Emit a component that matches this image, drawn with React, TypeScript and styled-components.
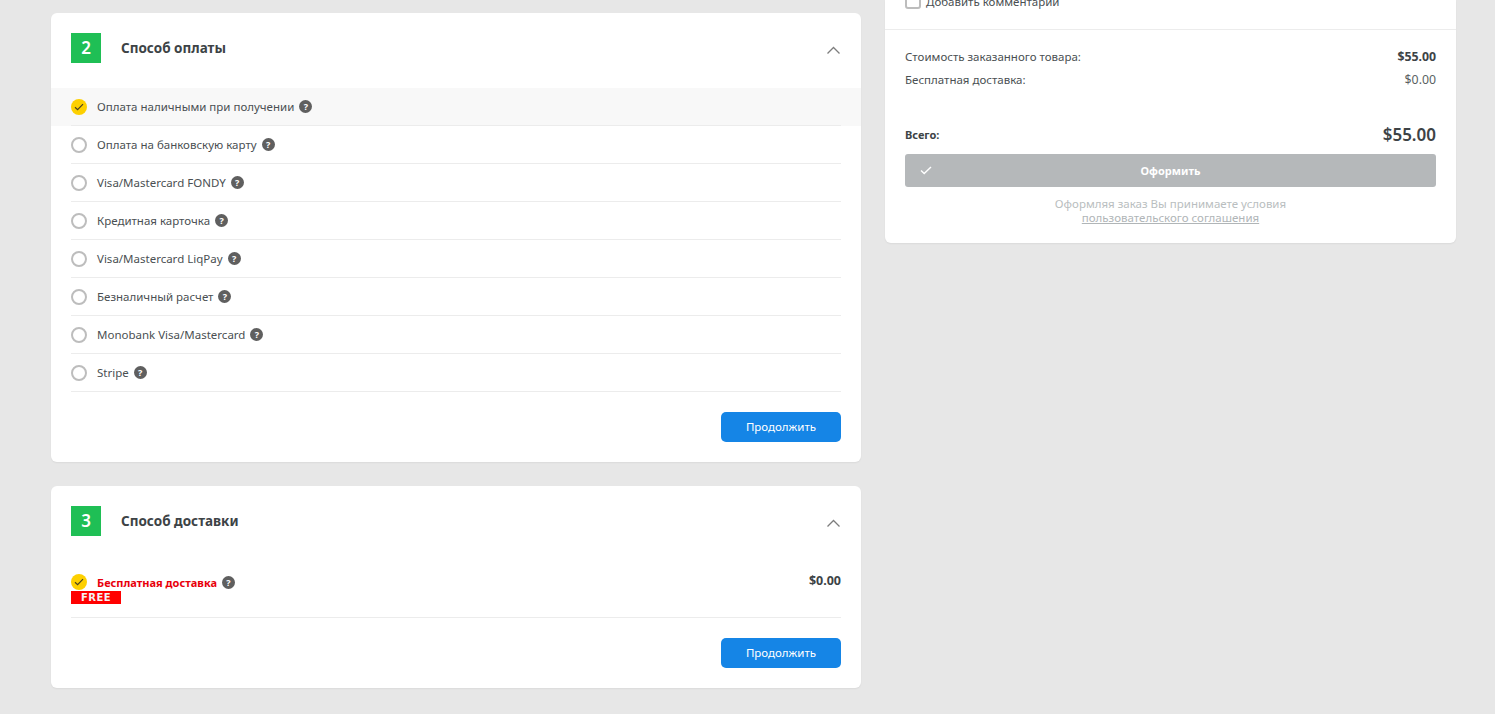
import styled, { createGlobalStyle } from "styled-components";

const GlobalStyle = createGlobalStyle`
  html, body {
    margin: 0;
    padding: 0;
    height: 714px;
    overflow: hidden;
    background: #e7e7e7;
    font-family: "Noto Sans", "Open Sans", sans-serif;
    color: #3d4346;
  }
`;

const Page = styled.div`
  display: flex;
  align-items: flex-start;
  gap: 24px;
  padding-left: 51px;
`;

const LeftColumn = styled.div`
  width: 810px;
  padding-top: 13px;
  display: flex;
  flex-direction: column;
  gap: 24px;
`;

const Card = styled.section`
  background: #fff;
  border-radius: 6px;
  box-shadow: 0 1px 2px rgba(0, 0, 0, 0.06);
`;

const CardHeader = styled.header`
  height: 75px;
  padding: 20px 20px 0;
  box-sizing: border-box;
  display: flex;
  align-items: flex-start;
`;

const StepBadge = styled.div`
  width: 30px;
  height: 30px;
  background: #1fbf55;
  color: #fff;
  font-size: 17px;
  font-weight: 600;
  line-height: 30px;
  text-align: center;
`;

const CardTitle = styled.h2`
  margin: 0 0 0 20px;
  font-size: 13.5px;
  font-weight: 700;
  line-height: 30px;
  color: #3d4346;
`;

const Chevron = styled.svg`
  margin: 13px 1px 0 auto;
  width: 13px;
  height: 8px;
`;

const Row = styled.div<{ $active?: boolean }>`
  padding: 0 20px;
  background: ${(p) => (p.$active ? "#f8f8f8" : "transparent")};
`;

const RowInner = styled.div`
  height: 38px;
  box-sizing: border-box;
  border-bottom: 1px solid #ececec;
  display: flex;
  align-items: center;
`;

const RadioOff = styled.span`
  width: 16px;
  height: 16px;
  box-sizing: border-box;
  border: 2px solid #bdbdbd;
  border-radius: 50%;
  background: #fff;
`;

const RadioOn = styled.span`
  width: 16px;
  height: 16px;
  border-radius: 50%;
  background: #fdd000;
  display: flex;
  align-items: center;
  justify-content: center;
`;

const RowLabel = styled.span`
  margin-left: 10px;
  font-size: 11.5px;
  color: #4a4f52;
`;

const Help = styled.span`
  margin-left: 5px;
  width: 13px;
  height: 13px;
  border-radius: 50%;
  background: #5f5f5f;
  color: #fff;
  font-size: 9px;
  font-weight: 700;
  line-height: 13px;
  text-align: center;
`;

const CardFooter = styled.div`
  padding: 20px;
  display: flex;
  justify-content: flex-end;
`;

const ContinueButton = styled.button`
  width: 120px;
  height: 30px;
  padding: 0 0 2px;
  border: 0;
  border-radius: 5px;
  background: #1585e6;
  color: #fff;
  font-family: inherit;
  font-size: 11.5px;
`;

const DeliveryBlock = styled.div`
  margin: 0 20px;
  padding-top: 13px;
  height: 57px;
  box-sizing: border-box;
  border-bottom: 1px solid #ececec;
  display: flex;
  justify-content: space-between;
  align-items: flex-start;
`;

const DeliveryRow = styled.div`
  display: flex;
  align-items: center;
  height: 16px;
`;

const DeliveryLabel = styled.span`
  margin-left: 10px;
  font-size: 11px;
  font-weight: 700;
  color: #e8000b;
`;

const FreeTag = styled.div`
  width: 50px;
  height: 13px;
  margin-top: 1px;
  background: #ff0000;
  color: #f4f4f4;
  font-family: "DejaVu Sans", sans-serif;
  font-size: 10px;
  font-weight: 700;
  line-height: 13px;
  text-align: center;
  letter-spacing: 0.4px;
`;

const DeliveryPrice = styled.span`
  font-size: 12.5px;
  font-weight: 700;
  line-height: 13px;
  color: #3d4346;
`;

const SummaryCard = styled(Card)`
  width: 571px;
  height: 243px;
  border-radius: 0 0 6px 6px;
`;

const CommentArea = styled.div`
  height: 30px;
  box-sizing: border-box;
  padding: 0 20px 27px;
  border-bottom: 1px solid #ececec;
  display: flex;
  align-items: center;
  overflow: hidden;
`;

const CheckBox = styled.span`
  width: 16px;
  height: 15px;
  flex: none;
  box-sizing: border-box;
  border: 2px solid #bdbdbd;
  border-radius: 3px;
`;

const CommentLabel = styled.span`
  margin-left: 5px;
  font-size: 11.5px;
  white-space: nowrap;
  color: #4a4f52;
`;

const Summary = styled.div`
  padding: 15px 20px 0;
`;

const SummaryLine = styled.div`
  display: flex;
  justify-content: space-between;
  height: 23px;
  align-items: center;
  font-size: 11.5px;
  color: #4a4f52;
`;

const SummaryValue = styled.span<{ $bold?: boolean }>`
  font-size: 12.3px;
  font-weight: ${(p) => (p.$bold ? 700 : 400)};
  color: ${(p) => (p.$bold ? "#3d4346" : "#5a5f62")};
`;

const TotalLine = styled.div`
  margin: 32px 0 9px;
  height: 22px;
  display: flex;
  justify-content: space-between;
  align-items: center;
`;

const TotalLabel = styled.span`
  font-size: 11px;
  font-weight: 700;
`;

const TotalValue = styled.span`
  font-size: 17px;
  font-weight: 600;
  color: #3d4346;
`;

const SubmitButton = styled.button`
  position: relative;
  width: 100%;
  height: 33px;
  border: 0;
  border-radius: 3px;
  background: #b5b8ba;
  color: #fff;
  font-family: inherit;
  font-size: 11px;
  font-weight: 700;
`;

const SubmitCheck = styled.svg`
  position: absolute;
  left: 15px;
  top: 12px;
  width: 12px;
  height: 9px;
`;

const Note = styled.p`
  margin: 10px 0 0;
  font-size: 11.5px;
  line-height: 14px;
  text-align: center;
  color: #b9bec0;
`;

const NoteLink = styled.a`
  display: block;
  color: #b0b5b7;
  text-decoration: underline;
`;

const methods = [
  "Оплата наличными при получении",
  "Оплата на банковскую карту",
  "Visa/Mastercard FONDY",
  "Кредитная карточка",
  "Visa/Mastercard LiqPay",
  "Безналичный расчет",
  "Monobank Visa/Mastercard",
  "Stripe",
];

function Tick() {
  return (
    <svg width="10" height="8" viewBox="0 0 10 8" fill="none">
      <path d="M1 4.2 3.6 6.6 9 1.2" stroke="#4a4220" strokeWidth="1.2" />
    </svg>
  );
}

function Header({ step, title }: { step: number; title: string }) {
  return (
    <CardHeader>
      <StepBadge>{step}</StepBadge>
      <CardTitle>{title}</CardTitle>
      <Chevron viewBox="0 0 13 8" fill="none">
        <path d="M.5 7.5 6.5 1.5 12.5 7.5" stroke="#7d7d7d" strokeWidth="1.3" />
      </Chevron>
    </CardHeader>
  );
}

export default function App() {
  return (
    <Page>
      <GlobalStyle />
      <LeftColumn>
        <Card>
          <Header step={2} title="Способ оплаты" />
          {methods.map((m, i) => (
            <Row key={m} $active={i === 0}>
              <RowInner>
                {i === 0 ? (
                  <RadioOn>
                    <Tick />
                  </RadioOn>
                ) : (
                  <RadioOff />
                )}
                <RowLabel>{m}</RowLabel>
                <Help>?</Help>
              </RowInner>
            </Row>
          ))}
          <CardFooter>
            <ContinueButton>Продолжить</ContinueButton>
          </CardFooter>
        </Card>
        <Card>
          <Header step={3} title="Способ доставки" />
          <DeliveryBlock>
            <div>
              <DeliveryRow>
                <RadioOn>
                  <Tick />
                </RadioOn>
                <DeliveryLabel>Бесплатная доставка</DeliveryLabel>
                <Help>?</Help>
              </DeliveryRow>
              <FreeTag>FREE</FreeTag>
            </div>
            <DeliveryPrice>$0.00</DeliveryPrice>
          </DeliveryBlock>
          <CardFooter>
            <ContinueButton>Продолжить</ContinueButton>
          </CardFooter>
        </Card>
      </LeftColumn>
      <SummaryCard>
        <CommentArea>
          <CheckBox />
          <CommentLabel>Добавить комментарий</CommentLabel>
        </CommentArea>
        <Summary>
          <SummaryLine>
            <span>Стоимость заказанного товара:</span>
            <SummaryValue $bold>$55.00</SummaryValue>
          </SummaryLine>
          <SummaryLine>
            <span>Бесплатная доставка:</span>
            <SummaryValue>$0.00</SummaryValue>
          </SummaryLine>
          <TotalLine>
            <TotalLabel>Всего:</TotalLabel>
            <TotalValue>$55.00</TotalValue>
          </TotalLine>
          <SubmitButton>
            <SubmitCheck viewBox="0 0 12 9" fill="none">
              <path d="M1 4.5 4.2 7.5 11 1" stroke="#fff" strokeWidth="1.4" />
            </SubmitCheck>
            Оформить
          </SubmitButton>
          <Note>
            Оформляя заказ Вы принимаете условия
            <NoteLink>пользовательского соглашения</NoteLink>
          </Note>
        </Summary>
      </SummaryCard>
    </Page>
  );
}
